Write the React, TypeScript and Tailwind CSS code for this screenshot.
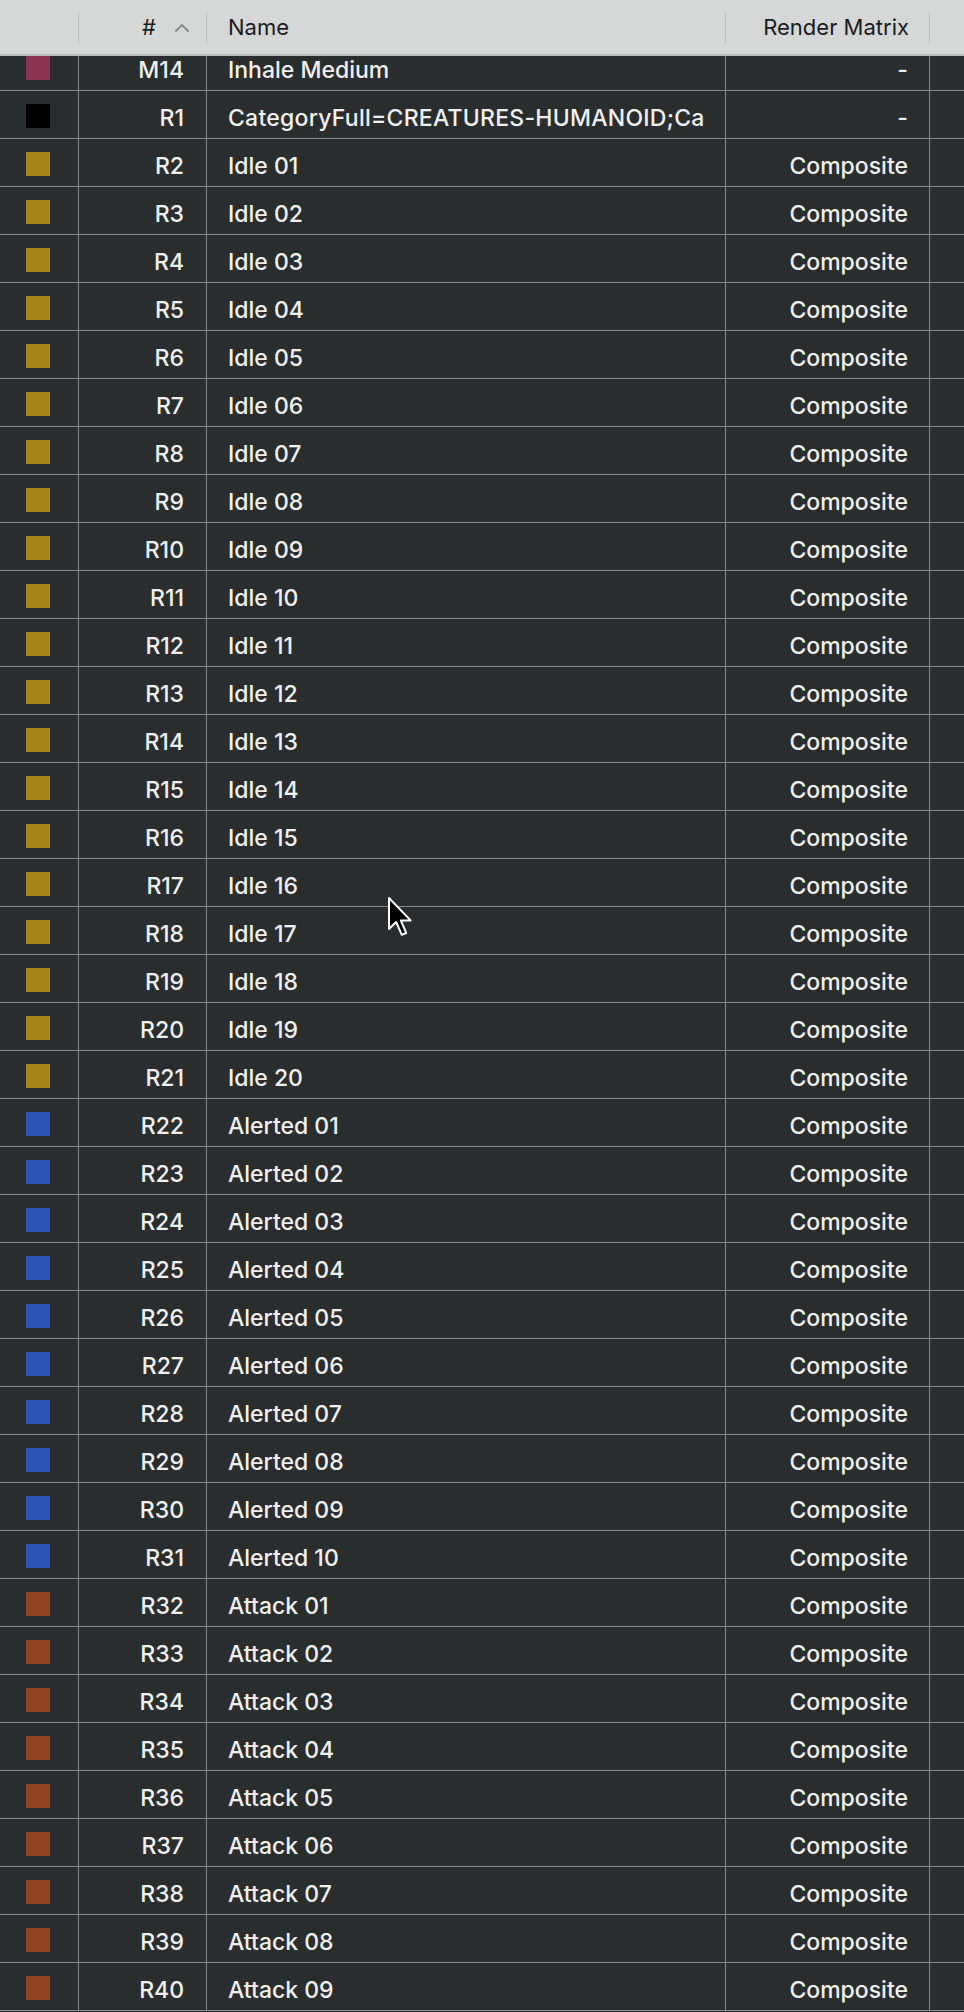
import React from 'react';

type Row = { id: string; name: string; color: string; matrix: string; wide?: boolean };

const IDLE = '#a5851a';
const ALERT = '#2c53b6';
const ATTACK = '#8f4321';

const pad = (n: number) => (n < 10 ? `0${n}` : `${n}`);

const rows: Row[] = [
  { id: 'M14', name: 'Inhale Medium', color: '#8b3351', matrix: '-' },
  { id: 'R1', name: 'CategoryFull=CREATURES-HUMANOID;Ca', color: '#000000', matrix: '-', wide: true },
  ...Array.from({ length: 20 }, (_, i) => ({
    id: `R${i + 2}`,
    name: `Idle ${pad(i + 1)}`,
    color: IDLE,
    matrix: 'Composite',
  })),
  ...Array.from({ length: 10 }, (_, i) => ({
    id: `R${i + 22}`,
    name: `Alerted ${pad(i + 1)}`,
    color: ALERT,
    matrix: 'Composite',
  })),
  ...Array.from({ length: 9 }, (_, i) => ({
    id: `R${i + 32}`,
    name: `Attack ${pad(i + 1)}`,
    color: ATTACK,
    matrix: 'Composite',
  })),
];

/** Column header with the short separator on its right */
const HeaderCell: React.FC<{ className: string; children?: React.ReactNode; last?: boolean }> = ({
  className,
  children,
  last,
}) => (
  <div className={`relative flex h-full items-center ${className}`}>
    {children}
    {!last && <div className="absolute right-0 top-[12px] h-[32px] w-px bg-[#bfc0c0]" />}
  </div>
);

const Cursor = () => (
  <svg
    className="absolute left-[387px] top-[896px] z-20"
    width="26"
    height="42"
    viewBox="0 0 13 21"
  >
    <path
      d="M1 1 L1 16.5 L4.6 13 L7.4 19.4 L9.6 18.5 L6.9 12.2 L11.8 12.2 Z"
      fill="#000"
      stroke="#fff"
      strokeWidth="1"
      strokeLinejoin="round"
    />
  </svg>
);

export default function App() {
  return (
    <div
      className="relative h-[2012px] w-[964px] overflow-hidden bg-[#2a2d2d]"
      style={{ fontFamily: 'Inter, "Noto Sans", sans-serif' }}
    >
      {/* Header */}
      <div className="relative z-10 flex h-[56px] border-b-2 border-[#bcbdbd] bg-[#d6d7d7] text-[22px] text-[#1b1b1b]">
        <HeaderCell className="w-[79px]" />
        <HeaderCell className="w-[128px] justify-end pr-[17px]">
          <span className="mr-[18px] pt-[1px]">#</span>
          <svg width="16" height="10" viewBox="0 0 16 10" className="mt-[1px]">
            <path d="M2 8 L8 2 L14 8" fill="none" stroke="#8c8d8d" strokeWidth="2" strokeLinecap="round" strokeLinejoin="round" />
          </svg>
        </HeaderCell>
        <HeaderCell className="w-[519px] pl-[21px]">
          <span className="pt-[1px]">Name</span>
        </HeaderCell>
        <HeaderCell className="w-[204px] justify-end pr-[21px]">
          <span className="pt-[1px]">Render Matrix</span>
        </HeaderCell>
        <HeaderCell className="flex-1" last />
      </div>

      {/* Rows */}
      <div className="overflow-hidden">
        <div className="-mt-[13px]">
          {rows.map((r) => (
            <div
              key={r.id}
              className="flex h-[48px] border-b border-[#8a8c8c] text-[23px] font-medium text-[#f0f0f0]"
            >
              <div className="flex w-[79px] items-center border-r border-[#8a8c8c] pl-[26px] pt-[2px]">
                <div className="h-[24px] w-[24px]" style={{ backgroundColor: r.color }} />
              </div>
              <div className="flex w-[128px] items-center justify-end border-r border-[#8a8c8c] pr-[22px] pt-[7px]">
                {r.id}
              </div>
              <div
                className={`flex w-[519px] items-center overflow-hidden whitespace-nowrap border-r border-[#8a8c8c] pl-[21px] pt-[7px] ${
                  r.wide ? 'tracking-[0.25px]' : ''
                }`}
              >
                {r.name}
              </div>
              <div className="flex w-[204px] items-center justify-end border-r border-[#8a8c8c] pr-[21px] pt-[7px]">
                {r.matrix}
              </div>
              <div className="flex-1" />
            </div>
          ))}
        </div>
      </div>

      <Cursor />
    </div>
  );
}
